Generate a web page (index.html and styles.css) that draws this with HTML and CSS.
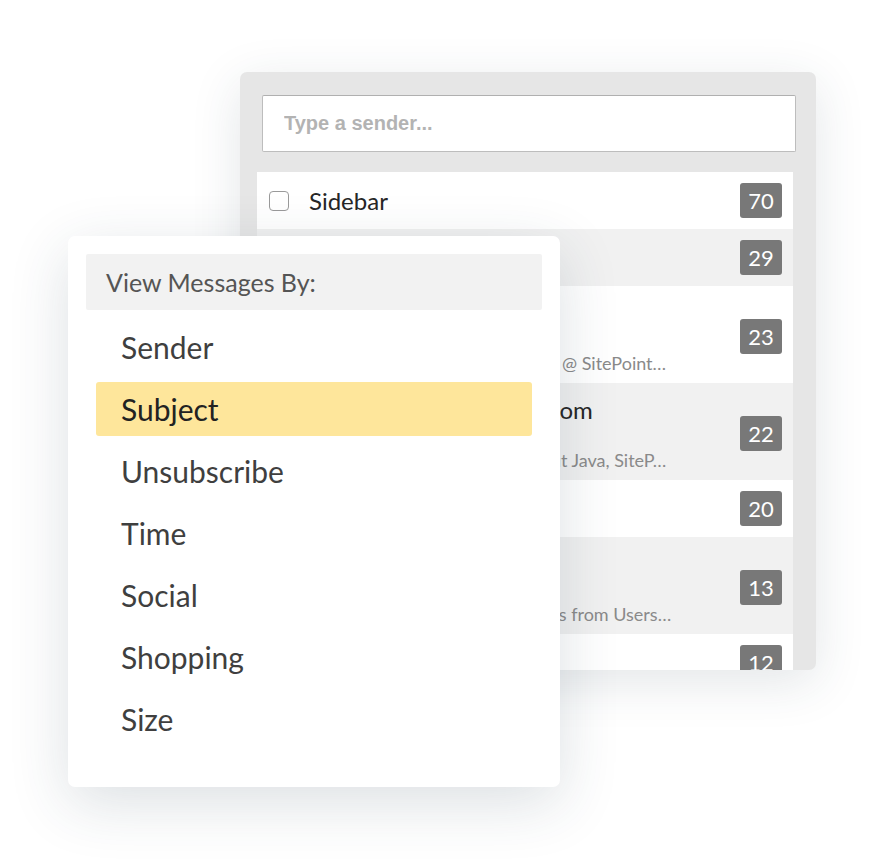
FILE: index.html
```html
<!DOCTYPE html>
<html lang="en">
<head>
    <meta charset="UTF-8">
    <meta name="viewport" content="width=device-width, initial-scale=1.0">
    <title>View Messages By</title>
    <link rel="stylesheet" href="styles.css">
</head>
<body>
    <div class="scene">
        <div class="inbox">
            <div class="search">
                <input type="text" class="search-input" placeholder="Type a sender..." autocomplete="off" spellcheck="false">
            </div>

            <ul class="senders">
                <li class="sender">
                    <span class="check"></span>
                    <div class="sender-info">
                        <div class="sender-name">Sidebar</div>
                    </div>
                    <span class="count">70</span>
                </li>
                <li class="sender">
                    <span class="check"></span>
                    <div class="sender-info">
                        <div class="sender-name">Medium Daily</div>
                    </div>
                    <span class="count">29</span>
                </li>
                <li class="sender sender-tall">
                    <span class="check"></span>
                    <div class="sender-info">
                        <div class="sender-name">SitePoint</div>
                        <div class="sender-sub">Jeff Stein, Senior Editor in Chief @ SitePoint…</div>
                    </div>
                    <span class="count">23</span>
                </li>
                <li class="sender sender-tall">
                    <span class="check"></span>
                    <div class="sender-info">
                        <div class="sender-name">newsletters@sitepoint.com</div>
                        <div class="sender-sub">Weekly news and tutorials about Java, SiteP…</div>
                    </div>
                    <span class="count">22</span>
                </li>
                <li class="sender">
                    <span class="check"></span>
                    <div class="sender-info">
                        <div class="sender-name">Product Hunt</div>
                    </div>
                    <span class="count">20</span>
                </li>
                <li class="sender sender-tall">
                    <span class="check"></span>
                    <div class="sender-info">
                        <div class="sender-name">Stack Overflow</div>
                        <div class="sender-sub">Your new questions and answers from Users…</div>
                    </div>
                    <span class="count">13</span>
                </li>
                <li class="sender">
                    <span class="check"></span>
                    <div class="sender-info">
                        <div class="sender-name">GitHub</div>
                    </div>
                    <span class="count">12</span>
                </li>
            </ul>
        </div>

        <div class="view-menu">
            <div class="view-menu-title">View Messages By:</div>
            <ul class="view-options">
                <li class="view-option">Sender</li>
                <li class="view-option is-active">Subject</li>
                <li class="view-option">Unsubscribe</li>
                <li class="view-option">Time</li>
                <li class="view-option">Social</li>
                <li class="view-option">Shopping</li>
                <li class="view-option">Size</li>
            </ul>
        </div>
    </div>
</body>
</html>
```

FILE: styles.css
```css
:root {
    --panel-bg: #e6e6e6;
    --row-alt: #f1f1f1;
    --badge-bg: #787878;
    --text-dark: #262626;
    --text-menu: #3f3f3f;
    --text-muted: #8a8a8a;
    --highlight: #fee69b;
    --font-ui: "Lato", "Noto Sans", "Liberation Sans", sans-serif;
    --shadow: 0 12px 50px rgba(40, 60, 80, 0.13);
}

* {
    box-sizing: border-box;
    margin: 0;
    padding: 0;
}

body {
    background: #fff;
    font-family: var(--font-ui);
    -webkit-font-smoothing: antialiased;
}

ul {
    list-style: none;
}

.scene {
    position: relative;
    width: 884px;
    height: 860px;
    padding: 72px 0 0 240px;
    overflow: hidden;
}

/* back panel: sender list */
.inbox {
    width: 576px;
    height: 598px;
    padding: 23px 23px 0 17px;
    background: var(--panel-bg);
    border-radius: 7px;
    box-shadow: var(--shadow);
    overflow: hidden;
}

.search {
    margin: 0 -3px 20px 5px;
}

.search-input {
    display: block;
    width: 100%;
    height: 57px;
    padding: 0 21px;
    background: #fff;
    border: 1px solid #bdbdbd;
    border-top-color: #b0b0b0;
    border-radius: 2px;
    outline: none;
    font-family: "Liberation Sans", Arial, sans-serif;
    font-size: 20px;
    font-weight: 700;
    color: var(--text-dark);
}

.search-input::placeholder {
    color: #b3b3b3;
}

.sender {
    display: flex;
    align-items: center;
    min-height: 57px;
    padding: 0 11px 0 12px;
    background: #fff;
}

.sender:nth-child(even) {
    background: var(--row-alt);
}

.sender-tall {
    min-height: 97px;
    padding-top: 12px;
    padding-bottom: 9px;
}

.check {
    flex: none;
    width: 20px;
    height: 20px;
    margin-right: 20px;
    background: #fff;
    border: 1.5px solid #9a9a9a;
    border-radius: 4px;
}

.sender-tall .check {
    align-self: flex-start;
    margin-top: 5px;
}

.sender-info {
    flex: 1;
    min-width: 0;
}

.sender-name {
    font-size: 24px;
    line-height: 30px;
    color: var(--text-dark);
    white-space: nowrap;
}

.sender-sub {
    margin-top: 24px;
    font-size: 18px;
    line-height: 22px;
    color: var(--text-muted);
    white-space: nowrap;
}

.count {
    flex: none;
    width: 42px;
    height: 35px;
    display: flex;
    align-items: center;
    justify-content: center;
    background: var(--badge-bg);
    border-radius: 3px;
    font-size: 22px;
    color: #fff;
}

/* front panel: view menu */
.view-menu {
    position: absolute;
    left: 68px;
    top: 236px;
    width: 492px;
    padding: 18px 18px 41px;
    background: #fff;
    border-radius: 7px;
    box-shadow: 0 16px 60px rgba(40, 60, 80, 0.16);
}

.view-menu-title {
    height: 56px;
    display: flex;
    align-items: center;
    padding-left: 20px;
    background: #f2f2f2;
    border-radius: 2px;
    font-size: 25px;
    color: #555;
}

.view-options {
    display: flex;
    flex-direction: column;
    gap: 8px;
    padding: 10px 10px 0;
}

.view-option {
    height: 54px;
    display: flex;
    align-items: center;
    padding-left: 25px;
    border-radius: 3px;
    font-size: 30px;
    color: var(--text-menu);
}

.view-option.is-active {
    background: var(--highlight);
    color: #222;
}
```
